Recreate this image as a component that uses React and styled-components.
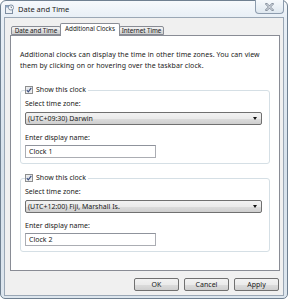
import React from "react";
import styled, { createGlobalStyle } from "styled-components";

const Global = createGlobalStyle`
  html, body { margin: 0; padding: 0; background: #ffffff; }
  body {
    font-family: "Noto Sans", "Open Sans", sans-serif;
    font-size: 7px;
    color: #1a1a1a;
  }
`;

const Frame = styled.div`
  width: 288px;
  height: 299px;
  box-sizing: border-box;
  border: 1px solid #6f8091;
  border-radius: 6px 6px 5px 5px;
  background: linear-gradient(to bottom, #f6f9fc 0, #e8eff6 16px, #d6e1eb 55%, #dde6ee 100%);
  display: flex;
  flex-direction: column;
`;

const TitleBar = styled.div`
  height: 16px;
  display: flex;
  align-items: flex-start;
  padding-left: 4px;
`;

const AppIcon = styled.svg`
  width: 9px;
  height: 10px;
  margin-top: 3px;
`;

const Title = styled.span`
  margin-left: 4px;
  line-height: 16px;
  font-size: 7.5px;
  color: #1b1b1b;
`;

const CloseButton = styled.div`
  margin-left: auto;
  margin-right: 3px;
  margin-top: -1px;
  width: 29px;
  height: 14px;
  box-sizing: border-box;
  border: 1px solid #8d9cae;
  border-top: none;
  border-radius: 0 0 4px 4px;
  background: linear-gradient(to bottom, #f6f9fc, #dfe8f0);
  display: flex;
  align-items: center;
  justify-content: center;
`;

const Client = styled.div`
  flex: 1;
  margin: 0 3px 2px 3px;
  border: 1px solid #9aa7b5;
  background: #f0f0f0;
  display: flex;
  flex-direction: column;
  padding: 5px 3px 4px 5px;
`;

const TabRow = styled.div`
  display: flex;
  align-items: flex-end;
  padding-left: 1px;
  position: relative;
  z-index: 1;
`;

const Tab = styled.div`
  box-sizing: border-box;
  width: ${(p) => p.$w}px;
  height: ${(p) => (p.$active ? 13 : 9)}px;
  margin-bottom: ${(p) => (p.$active ? -1 : 0)}px;
  border: 1px solid #898c95;
  border-bottom: ${(p) => (p.$active ? "none" : "1px solid #898c95")};
  margin-left: ${(p) => (p.$first ? 0 : -1)}px;
  border-radius: 2px 2px 0 0;
  background: ${(p) =>
    p.$active
      ? "#ffffff"
      : "linear-gradient(to bottom, #f2f2f2, #ebebeb 50%, #dddddd 50%, #cfcfcf)"};
  display: flex;
  align-items: ${(p) => (p.$active ? "flex-start" : "center")};
  justify-content: center;
  line-height: ${(p) => (p.$active ? "10px" : "8px")};
  white-space: nowrap;
  font-size: 6.3px;
  letter-spacing: -0.05px;
`;

const Panel = styled.div`
  flex: 1;
  background: #ffffff;
  border: 1px solid #898c95;
  padding: 13px 9px 0 9px;
`;

const Intro = styled.p`
  margin: 0;
  line-height: 11px;
  white-space: nowrap;
  letter-spacing: 0.08px;
`;

const Group = styled.fieldset`
  margin: ${(p) => p.$gap}px 0 0 0;
  padding: 0 6px 5px 4px;
  border: 1px solid #d5dfe5;
  border-radius: 3px;
  min-width: 0;
`;

const Legend = styled.legend`
  padding: 0 2px 0 0;
  display: flex;
  align-items: center;
  gap: 3px;
  line-height: 10px;
`;

const Check = styled.svg`
  width: 8px;
  height: 8px;
  display: block;
`;

const FieldLabel = styled.div`
  margin-top: ${(p) => p.$gap}px;
  line-height: 10px;
`;

const Select = styled.div`
  margin-top: 3px;
  width: 237px;
  height: 13px;
  box-sizing: border-box;
  border: 1px solid #707070;
  border-radius: 2px;
  background: linear-gradient(to bottom, #f2f2f2, #ebebeb 50%, #dddddd 50%, #cfcfcf);
  display: flex;
  align-items: center;
  padding: 0 4px 0 2px;
`;

const SelectText = styled.span`
  flex: 1;
  white-space: nowrap;
`;

const Arrow = styled.span`
  width: 0;
  height: 0;
  border-left: 2.5px solid transparent;
  border-right: 2.5px solid transparent;
  border-top: 3px solid #111;
`;

const NameInput = styled.input`
  display: block;
  margin-top: 2px;
  width: 131px;
  height: 13px;
  box-sizing: border-box;
  border: 1px solid #abadb3;
  border-top-color: #8f939c;
  background: #fff;
  padding: 0 3px;
  font-family: inherit;
  font-size: 7px;
  color: #1a1a1a;
  outline: none;
`;

const ButtonRow = styled.div`
  display: flex;
  justify-content: flex-end;
  gap: 5px;
  margin-top: 7px;
  padding-right: 1px;
`;

const Button = styled.div`
  width: 45px;
  height: 13px;
  box-sizing: border-box;
  border: 1px solid #707070;
  border-radius: 2px;
  background: linear-gradient(to bottom, #f2f2f2, #ebebeb 50%, #dddddd 50%, #cfcfcf);
  display: flex;
  align-items: center;
  justify-content: center;
  font-size: 7px;
`;

function CheckBox() {
  return (
    <Check viewBox="0 0 8 8">
      <rect x="0.5" y="0.5" width="7" height="7" fill="#f3f3f3" stroke="#8e8f8f" />
      <rect x="1.5" y="1.5" width="5" height="5" fill="#e4e6ea" />
      <path d="M1.8 4.2 L3.3 5.8 L6.3 1.9" fill="none" stroke="#3b4f80" strokeWidth="1.2" />
    </Check>
  );
}

function ClockGroup({ gap, zone, name }) {
  return (
    <Group $gap={gap}>
      <Legend>
        <CheckBox />
        Show this clock
      </Legend>
      <FieldLabel $gap={4}>Select time zone:</FieldLabel>
      <Select>
        <SelectText>{zone}</SelectText>
        <Arrow />
      </Select>
      <FieldLabel $gap={8}>Enter display name:</FieldLabel>
      <NameInput defaultValue={name} readOnly />
    </Group>
  );
}

export default function App() {
  return (
    <>
      <Global />
      <Frame>
        <TitleBar>
          <AppIcon viewBox="0 0 9 10">
            <rect x="0.5" y="1.5" width="7" height="8" fill="#eef2f6" stroke="#7f8fa3" />
            <rect x="0.5" y="1.5" width="7" height="2" fill="#8fa8c4" />
            <circle cx="6" cy="3.5" r="2.6" fill="#f7f9fb" stroke="#6c7f95" strokeWidth="0.8" />
            <path d="M6 2.3 V3.6 H7" fill="none" stroke="#34465c" strokeWidth="0.6" />
          </AppIcon>
          <Title>Date and Time</Title>
          <CloseButton>
            <svg width="9" height="8" viewBox="0 0 9 8">
              <path d="M1.5 1 L7.5 7 M7.5 1 L1.5 7" stroke="#8a94a1" strokeWidth="2.4" strokeLinecap="square" />
              <path d="M1.5 1 L7.5 7 M7.5 1 L1.5 7" stroke="#eef2f6" strokeWidth="0.9" />
            </svg>
          </CloseButton>
        </TitleBar>
        <Client>
          <TabRow>
            <Tab $w={50} $first>Date and Time</Tab>
            <Tab $w={60} $active>Additional Clocks</Tab>
            <Tab $w={45}>Internet Time</Tab>
          </TabRow>
          <Panel>
            <Intro>
              Additional clocks can display the time in other time zones. You can view
              <br />
              them by clicking on or hovering over the taskbar clock.
            </Intro>
            <ClockGroup gap={14} zone="(UTC+09:30) Darwin" name="Clock 1" />
            <ClockGroup gap={9} zone="(UTC+12:00) Fiji, Marshall Is." name="Clock 2" />
          </Panel>
          <ButtonRow>
            <Button>OK</Button>
            <Button>Cancel</Button>
            <Button>Apply</Button>
          </ButtonRow>
        </Client>
      </Frame>
    </>
  );
}
